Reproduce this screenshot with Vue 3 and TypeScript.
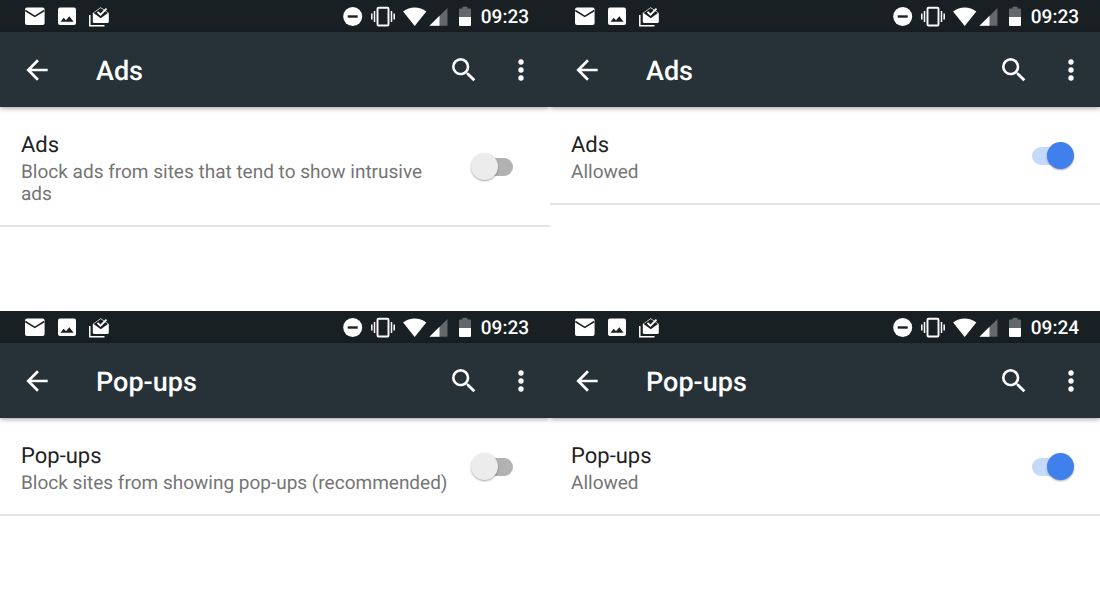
<script setup lang="ts">
import { ref } from 'vue'

interface Screen {
  id: string
  title: string
  summary: string
  allowed: boolean
  time: string
}

const screens = ref<Screen[]>([
  { id: 'ads-off', title: 'Ads', summary: 'Block ads from sites that tend to show intrusive ads', allowed: false, time: '09:23' },
  { id: 'ads-on', title: 'Ads', summary: 'Allowed', allowed: true, time: '09:23' },
  { id: 'popups-off', title: 'Pop-ups', summary: 'Block sites from showing pop-ups (recommended)', allowed: false, time: '09:23' },
  { id: 'popups-on', title: 'Pop-ups', summary: 'Allowed', allowed: true, time: '09:24' },
])
</script>

<template>
  <main class="gallery">
    <section v-for="s in screens" :key="s.id" class="screen">
      <div class="status">
        <div class="notifications">
          <svg width="24" height="24" viewBox="0 0 24 24" aria-hidden="true">
            <rect x="2" y="2.500" width="19.600" height="17.500" rx="2" fill="#fff" />
            <path d="M2.300 5.500 11.800 11.400 21.300 5.500" fill="none" stroke="#192023" stroke-width="1.500" />
          </svg>
          <svg width="24" height="24" viewBox="0 0 24 24" aria-hidden="true">
            <rect x="3" y="2.500" width="18" height="17.500" rx="2" fill="#fff" />
            <path fill="#192023" d="M5.500 16.700l3.200-4 2.300 2.500 3.300-4 4.300 5.500z" />
          </svg>
          <svg width="24" height="24" viewBox="0 0 24 24" aria-hidden="true">
            <path d="M2.800 10v10.700h14.700" fill="none" stroke="#fff" stroke-width="1.500" />
            <path fill="#fff" d="M5.800 8 13.700 2.300 21.800 8v8.500a1.500 1.500 0 0 1-1.500 1.500h-13A1.500 1.500 0 0 1 5.800 16.500z" />
            <path fill="#192023" d="M6.600 8 13.700 3.100 21 8l-7.200 5.200z" />
            <path d="M10.500 6.800l3 2.900L19.500 3.600" fill="none" stroke="#fff" stroke-width="1.800" />
          </svg>
        </div>
        <div class="system">
          <svg width="20" height="24" viewBox="0 0 20 24" aria-hidden="true">
            <circle cx="9.700" cy="11.500" r="9.500" fill="#fff" />
            <path d="M4.700 11.500h10" stroke="#192023" stroke-width="2.400" />
          </svg>
          <svg width="24" height="24" viewBox="0 0 24 24" aria-hidden="true" fill="none" stroke="#fff">
            <rect x="6.500" y="2.700" width="11" height="17.800" rx="1" stroke-width="1.900" />
            <path d="M3.500 6.100v11M20.500 6.100v11M.8 8.600v6M23.200 8.600v6" stroke-width="1.500" />
          </svg>
          <div class="radio">
            <svg width="24" height="24" viewBox="0 0 24 24" aria-hidden="true">
              <path fill="#fff" d="M11.700 21 .1 6.500A19 19 0 0 1 11.700 2.500 19 19 0 0 1 23.300 6.500z" />
            </svg>
            <svg width="20" height="24" viewBox="0 0 20 24" aria-hidden="true">
              <path fill="#62686b" d="M.5 20.700 18.500 2.900v17.800z" />
              <path fill="#fff" d="M.5 20.700 10.500 10.800v9.900z" />
            </svg>
          </div>
          <svg width="16" height="24" viewBox="0 0 16 24" aria-hidden="true">
            <path fill="#62686b" d="M2 4.500a1 1 0 0 1 1-1h2.500V1.800h5v1.700H13a1 1 0 0 1 1 1V12H2z" />
            <path fill="#fff" d="M2 12h12v8a1 1 0 0 1-1 1H3a1 1 0 0 1-1-1z" />
          </svg>
          <time class="clock">{{ s.time }}</time>
        </div>
      </div>

      <header class="toolbar">
        <button type="button" class="icon-button" aria-label="Back">
          <svg width="32" height="32" viewBox="0 0 24 24" aria-hidden="true">
            <path fill="currentColor" d="M20 11H7.830l5.590-5.590L12 4l-8 8 8 8 1.410-1.410L7.830 13H20v-2z" />
          </svg>
        </button>
        <h1 class="title">{{ s.title }}</h1>
        <button type="button" class="icon-button" aria-label="Search">
          <svg width="32" height="32" viewBox="0 0 24 24" aria-hidden="true">
            <path fill="currentColor" d="M15.500 14h-.790l-.280-.270A6.471 6.471 0 0 0 16 9.500 6.500 6.500 0 1 0 9.500 16c1.610 0 3.090-.590 4.230-1.570l.270.280v.790l5 4.990L20.490 19l-4.990-5zm-6 0C7.010 14 5 11.990 5 9.500S7.010 5 9.500 5 14 7.010 14 9.500 11.990 14 9.500 14z" />
          </svg>
        </button>
        <button type="button" class="icon-button more" aria-label="More options">
          <svg width="32" height="32" viewBox="0 0 24 24" aria-hidden="true" fill="currentColor">
            <circle cx="12" cy="6" r="2" />
            <circle cx="12" cy="12" r="2" />
            <circle cx="12" cy="18" r="2" />
          </svg>
        </button>
      </header>

      <div class="preference">
        <div class="text">
          <label class="name" :for="s.id">{{ s.title }}</label>
          <p :id="s.id + '-summary'" class="summary">{{ s.summary }}</p>
        </div>
        <input :id="s.id" v-model="s.allowed" class="switch" type="checkbox" role="switch" :aria-describedby="s.id + '-summary'" />
      </div>
    </section>
  </main>
</template>

<style>
body {
  margin: 0;
  background: #fff;
}
</style>

<style scoped>
.gallery {
  display: grid;
  grid-template-columns: 1fr 1fr;
  font-family: Roboto, "Noto Sans", sans-serif;
  text-rendering: geometricPrecision;
}

.screen {
  min-width: 0;
  padding-bottom: 84px;
  overflow: hidden;
}

.screen:nth-last-child(-n + 2) {
  padding-bottom: 0;
}

.status {
  box-sizing: border-box;
  display: flex;
  align-items: center;
  justify-content: space-between;
  height: 32px;
  padding: 2px 21px 0 23px;
  background: #192023;
  color: #fff;
}

.notifications,
.system,
.radio {
  display: flex;
  align-items: center;
  gap: 8px;
}

.radio {
  gap: 2px;
}

.clock {
  font-size: 19px;
  font-weight: 500;
  line-height: 24px;
}

svg {
  display: block;
  flex: none;
}

.toolbar {
  display: flex;
  align-items: center;
  height: 75px;
  padding: 0 13px 0 21px;
  background: #263238;
  color: #fff;
  box-shadow: 0 1px 5px rgba(0, 0, 0, 0.4);
}

.icon-button {
  flex: none;
  padding: 0;
  border: 0;
  background: none;
  color: inherit;
  cursor: pointer;
}

.more {
  margin-left: 25px;
}

.title {
  flex: 1;
  margin: 0;
  padding: 2px 0 0 43px;
  font-size: 27px;
  font-weight: 500;
  line-height: 32px;
}

.preference {
  display: flex;
  align-items: center;
  gap: 18px;
  padding: 21px 26px 20px 21px;
  border-bottom: 2px solid #e4e4e4;
}

.text {
  flex: 1;
  min-width: 0;
  padding-top: 4px;
}

.name {
  display: block;
  font-size: 22px;
  line-height: 28px;
  color: #1f1f1f;
}

.summary {
  margin: 1px 0 0;
  font-size: 19px;
  line-height: 22px;
  color: #757575;
}

.switch {
  position: relative;
  flex: none;
  width: 53px;
  height: 27px;
  margin: 0;
  appearance: none;
  cursor: pointer;
}

.switch::before {
  content: "";
  position: absolute;
  inset: 5px 11px 4px;
  border-radius: 9px;
  background: #b2b2b2;
}

.switch::after {
  content: "";
  position: absolute;
  top: 0;
  left: 0;
  width: 27px;
  height: 27px;
  border-radius: 50%;
  background: #ececec;
  box-shadow: 0 1px 2px rgba(0, 0, 0, 0.35);
}

.switch:checked::before {
  background: #c5d9fa;
}

.switch:checked::after {
  left: 26px;
  background: #4080ec;
}
</style>
